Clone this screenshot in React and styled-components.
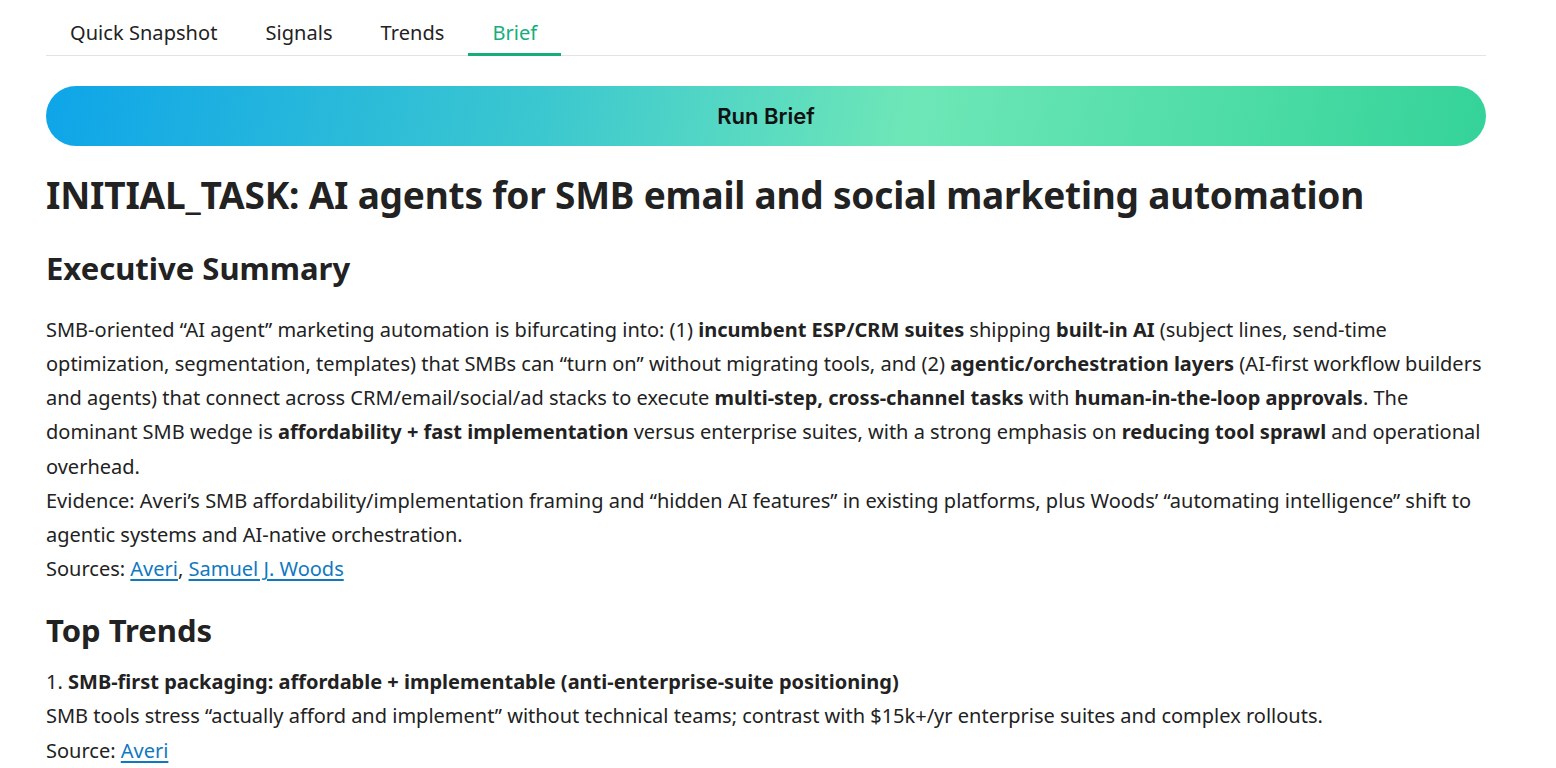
import React, { useState } from "react";
import styled, { createGlobalStyle } from "styled-components";

const textColor = "#222222";
const accent = "#14ae7c";
const linkColor = "#0f79c0";
const bodyFont = `"Noto Sans", "Open Sans", sans-serif`;

const GlobalStyle = createGlobalStyle`
  html, body {
    margin: 0;
    padding: 0;
    background: #ffffff;
  }
  body {
    font-family: ${bodyFont};
    color: ${textColor};
  }
`;

const Page = styled.div`
  width: 1440px;
  padding: 10px 0 40px 46px;
`;

const TabBar = styled.nav`
  display: flex;
  border-bottom: 1px solid #e4e4e4;
`;

const Tab = styled.button`
  margin: 0 0 -1px;
  padding: 11px 24px 8px;
  border: 0;
  border-bottom: 3px solid ${({ $active }) => ($active ? accent : "transparent")};
  background: none;
  font-family: ${bodyFont};
  font-size: 20px;
  line-height: 24px;
  letter-spacing: 0.05px;
  color: ${({ $active }) => ($active ? accent : textColor)};
  cursor: pointer;
`;

const RunButton = styled.button`
  display: block;
  width: 100%;
  height: 60px;
  margin-top: 30px;
  border: 0;
  border-radius: 30px;
  background: linear-gradient(100deg, #0ea5e9 0%, #3cc8cf 35%, #6ee7b7 60%, #34d399 100%);
  font-family: Inter, "Noto Sans", sans-serif;
  font-size: 22px;
  font-weight: 600;
  color: #111111;
  cursor: pointer;
`;

const Title = styled.h1`
  margin: 27px 0 0;
  font-size: 37px;
  line-height: 44px;
  letter-spacing: -0.2px;
  font-weight: 700;
`;

const SectionTitle = styled.h2`
  margin: ${({ $top }) => $top}px 0 0;
  font-size: 31px;
  line-height: 40px;
  font-weight: 700;
`;

const Para = styled.p`
  margin: ${({ $top }) => $top}px 0 0;
  font-size: 20px;
  line-height: 34.15px;
`;

const Strong = styled.strong`
  font-weight: 700;
`;

const Link = styled.a`
  color: ${linkColor};
  text-decoration: underline;
  text-underline-offset: 3px;
`;

const tabs = ["Quick Snapshot", "Signals", "Trends", "Brief"];

export default function App() {
  const [active, setActive] = useState("Brief");
  return (
    <>
      <GlobalStyle />
      <Page>
        <TabBar>
          {tabs.map((t) => (
            <Tab key={t} $active={t === active} onClick={() => setActive(t)}>
              {t}
            </Tab>
          ))}
        </TabBar>
        <RunButton>Run Brief</RunButton>
        <Title>INITIAL_TASK: AI agents for SMB email and social marketing automation</Title>

        <SectionTitle $top={31}>Executive Summary</SectionTitle>
        <Para $top={25}>
          SMB-oriented “AI agent” marketing automation is bifurcating into: (1){" "}
          <Strong>incumbent ESP/CRM suites</Strong> shipping <Strong>built-in AI</Strong> (subject
          lines, send-time optimization, segmentation, templates) that SMBs can “turn on” without
          migrating tools, and (2) <Strong>agentic/orchestration layers</Strong> (AI-first workflow
          builders and agents) that connect across CRM/email/social/ad stacks to execute{" "}
          <Strong>multi-step, cross-channel tasks</Strong> with{" "}
          <Strong>human-in-the-loop approvals</Strong>. The dominant SMB wedge is{" "}
          <Strong>affordability + fast implementation</Strong> versus enterprise suites, with a
          strong emphasis on <Strong>reducing tool sprawl</Strong> and operational overhead.
          <br />
          Evidence: Averi’s SMB affordability/implementation framing and “hidden AI features” in
          existing platforms, plus Woods’ “automating intelligence” shift to agentic systems and
          AI-native orchestration.
          <br />
          Sources: <Link href="#averi">Averi</Link>, <Link href="#woods">Samuel J. Woods</Link>
        </Para>

        <SectionTitle $top={24}>Top Trends</SectionTitle>
        <Para $top={15}>
          1. <Strong>SMB-first packaging: affordable + implementable (anti-enterprise-suite positioning)</Strong>
          <br />
          SMB tools stress “actually afford and implement” without technical teams; contrast with
          $15k+/yr enterprise suites and complex rollouts.
          <br />
          Source: <Link href="#averi">Averi</Link>
        </Para>
      </Page>
    </>
  );
}
